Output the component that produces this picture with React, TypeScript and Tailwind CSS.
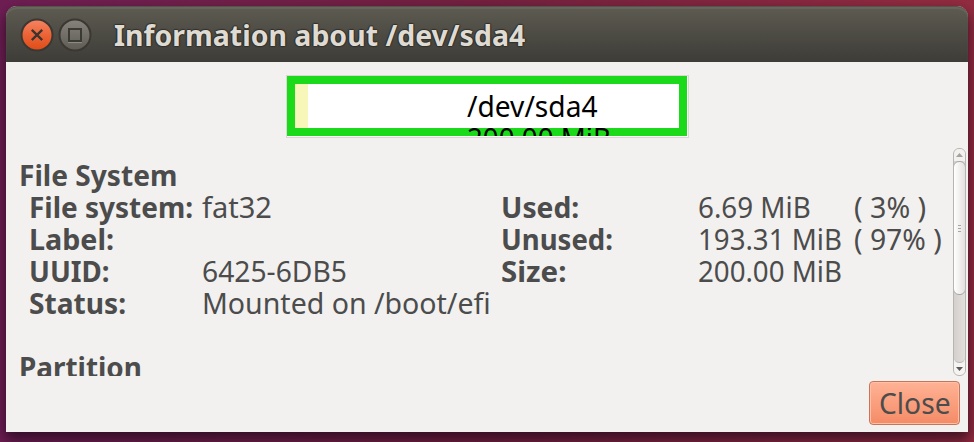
import { useLayoutEffect, useRef, useState } from 'react';

type LabelProps = { text: string; width: number; className?: string };

// A single line of text condensed or expanded horizontally to a given width.
function Label({ text, width, className = '' }: LabelProps) {
  const ref = useRef<HTMLSpanElement>(null);
  const [scale, setScale] = useState(1);
  useLayoutEffect(() => {
    if (ref.current) setScale(width / ref.current.offsetWidth);
  }, [text, width]);
  return (
    <span className={`block h-8 leading-8 ${className}`} style={{ width }}>
      <span ref={ref} className="inline-block origin-left whitespace-pre" style={{ transform: `scaleX(${scale})` }}>
        {text}
      </span>
    </span>
  );
}

function TitleBar() {
  return (
    <header className="flex h-14 shrink-0 items-center rounded-t-[11px] border-t border-[#55534b] bg-gradient-to-b from-[#5d5b51] to-[#3d3c37] pl-[14px] shadow-[inset_0_2px_1px_#69675d]">
      <svg width="72" height="34" viewBox="0 0 72 34" className="mt-[1px] shrink-0">
        <defs>
          <linearGradient id="orange" x1="0" y1="0" x2="0" y2="1">
            <stop offset="0" stopColor="#f58563" />
            <stop offset="0.5" stopColor="#ec6336" />
            <stop offset="1" stopColor="#df4c16" />
          </linearGradient>
          <linearGradient id="grey" x1="0" y1="0" x2="0" y2="1">
            <stop offset="0" stopColor="#85837c" />
            <stop offset="1" stopColor="#5d5b54" />
          </linearGradient>
        </defs>
        <circle cx="17" cy="17" r="15.5" fill="url(#orange)" stroke="#3b3833" strokeWidth="2" />
        <path d="M12 13l10 10M22 13l-10 10" stroke="#f58a67" strokeWidth="1.5" opacity="0.6" />
        <path d="M11.8 11.8l10.4 10.4M22.2 11.8l-10.4 10.4" stroke="#3d332d" strokeWidth="2.4" />
        <circle cx="55" cy="17" r="15.5" fill="url(#grey)" stroke="#3b3833" strokeWidth="2" />
        <path d="M48 24.5h14" stroke="#8b8982" strokeWidth="1.2" />
        <rect x="49" y="11" width="12" height="12" fill="none" stroke="#3a3934" strokeWidth="2" />
      </svg>
      <Label
        text="Information about /dev/sda4"
        width={411}
        className="ml-[22px] font-bold text-[#dfdbd2] [text-shadow:0_-1px_1px_#30302c,0_1px_1px_#30302c,-1px_0_1px_#30302c,1px_0_1px_#30302c]"
      />
    </header>
  );
}

function PartitionBar() {
  return (
    <div className="mx-auto mt-[13px] h-[63px] w-[403px] shrink-0 border border-[#dad7d4] bg-white">
      <div className="relative h-[60px] w-[400px] overflow-hidden border-8 border-[#1ada1a] bg-white">
        <div className="h-full w-[13px] bg-[#f8f7ba]" />
        <div className="absolute top-[6px] left-[172px] text-black">
          <Label text="/dev/sda4" width={131} />
        </div>
      </div>
      <div className="relative -mt-2 h-2 overflow-hidden pl-[180px] text-black">
        <Label text="200.00 MiB" width={144} className="-mt-[6px]" />
      </div>
    </div>
  );
}

const fields = [
  { name: 'File system:', nw: 164, value: 'fat32', vw: 70 },
  { name: 'Label:', nw: 85, value: '', vw: 0 },
  { name: 'UUID:', nw: 81, value: '6425-6DB5', vw: 145 },
  { name: 'Status:', nw: 97, value: 'Mounted on /boot/efi', vw: 289 },
];

const usage = [
  { name: 'Used:', nw: 78, value: '6.69 MiB', vw: 113, pct: '( 3% )', pw: 72 },
  { name: 'Unused:', nw: 112, value: '193.31 MiB', vw: 144, pct: '( 97% )', pw: 88 },
  { name: 'Size:', nw: 65, value: '200.00 MiB', vw: 144, pct: '', pw: 0 },
];

function Details() {
  return (
    <div className="min-w-0 flex-1 overflow-hidden pt-[11px] pl-[13px]">
      <Label text="File System" width={158} className="font-bold" />
      <div className="flex pl-[10px]">
        <div className="grid h-32 w-[472px] shrink-0 grid-cols-[173px_299px] content-start">
          {fields.map((f) => (
            <div key={f.name} className="contents">
              <Label text={f.name} width={f.nw} className="font-bold" />
              {f.value ? <Label text={f.value} width={f.vw} /> : <span />}
            </div>
          ))}
        </div>
        <div className="grid shrink-0 grid-cols-[197px_156px_90px] content-start">
          {usage.map((u) => (
            <div key={u.name} className="contents">
              <Label text={u.name} width={u.nw} className="font-bold" />
              <Label text={u.value} width={u.vw} />
              {u.pct ? <Label text={u.pct} width={u.pw} /> : <span />}
            </div>
          ))}
        </div>
      </div>
      <Label text="Partition" width={123} className="mt-8 font-bold" />
    </div>
  );
}

function ScrollBar() {
  return (
    <div className="mr-[2px] flex w-[13px] shrink-0 flex-col overflow-hidden rounded-[6px] border border-[#b9b6b2] bg-gradient-to-r from-[#d3d0cd] to-[#e2e0dd]">
      <div className="flex h-[12px] shrink-0 items-center justify-center bg-[#f2f1f0]">
        <svg width="7" height="4" viewBox="0 0 7 4"><path d="M0 4L3.5 0L7 4z" fill="#a5a29e" /></svg>
      </div>
      <div className="-mx-px flex h-[134px] shrink-0 flex-col items-center justify-center gap-[2px] rounded-[6px] border border-[#a9a6a2] bg-gradient-to-r from-white to-[#e3e1df]">
        <div className="h-px w-[3px] bg-[#aaa7a3]" />
        <div className="h-px w-[3px] bg-[#aaa7a3]" />
        <div className="h-px w-[3px] bg-[#aaa7a3]" />
      </div>
      <div className="flex-1 bg-[#f2f1f0]">
        <div className="h-full rounded-b-[6px] border-b border-[#b9b6b2] bg-gradient-to-r from-[#d3d0cd] to-[#e2e0dd]" />
      </div>
      <div className="flex h-[12px] shrink-0 items-center justify-center bg-[#f5f4f3]">
        <svg width="7" height="4" viewBox="0 0 7 4"><path d="M0 0h7L3.5 4z" fill="#5c5a57" /></svg>
      </div>
    </div>
  );
}

export default function App() {
  return (
    <div className="h-[442px] w-[974px] overflow-hidden bg-gradient-to-r from-[#6e1e53] via-[#74213f] to-[#932c40] px-[6px] pt-[6px] font-['Noto_Sans','Open_Sans',sans-serif] text-[29px]">
      <div className="flex h-[426px] flex-col rounded-t-[11px] bg-[#f2f1f0] text-[#4c4c4c] shadow-[0_7px_13px_1px_rgba(20,5,20,0.65)]">
        <TitleBar />
        <PartitionBar />
        <main className="mt-[10px] flex h-[228px] shrink-0">
          <Details />
          <ScrollBar />
        </main>
        <footer className="flex justify-end pt-[5px] pr-[8px]">
          <button className="flex h-11 w-[91px] items-center justify-center rounded-[4px] border-[1.5px] border-[#c7755a] bg-gradient-to-b from-[#ffb295] to-[#f48b66] shadow-[inset_0_0_0_1px_#ffc0a7]">
            <Label text="Close" width={72} className="mt-[-1px] ml-px text-left" />
          </button>
        </footer>
      </div>
    </div>
  );
}
